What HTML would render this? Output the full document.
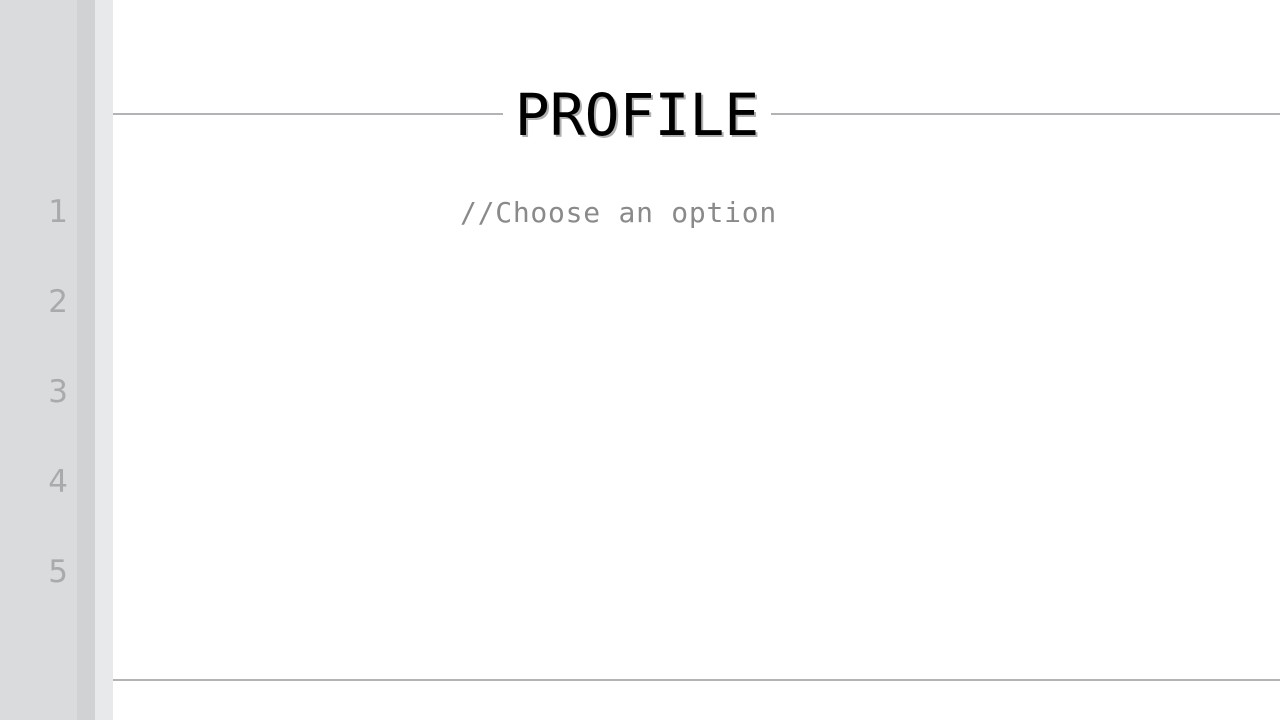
<!DOCTYPE html>
<html><head><meta charset="utf-8"><style>
html,body{margin:0;padding:0;width:1280px;height:720px;overflow:hidden;background:#fff;position:relative}
.g1{position:absolute;left:0;top:0;width:77px;height:720px;background:#dadbdd}
.g2{position:absolute;left:77px;top:0;width:18px;height:720px;background:#d1d2d4}
.g3{position:absolute;left:95px;top:0;width:18px;height:720px;background:#e8e9eb}
.n{position:absolute;left:28px;width:40px;text-align:right;font:31px "DejaVu Sans","Liberation Sans",sans-serif;color:#a9aaac;line-height:40px}
.line{position:absolute;height:2px;background:#b3b3b5}
.title{position:absolute;left:503px;width:268px;top:80px;text-align:center;font:58px "DejaVu Sans Mono","Liberation Mono",monospace;color:#000;text-shadow:2px 2px 0 #b0b0b0;line-height:70px;letter-spacing:0px}
.opt{position:absolute;left:460px;top:194px;font:28px "DejaVu Sans Mono","Liberation Mono",monospace;color:#8a8a8a;line-height:38px;letter-spacing:0.75px}
</style></head><body>
<div class="g1"></div><div class="g2"></div><div class="g3"></div>
<div class="n" style="top:192px">1</div>
<div class="n" style="top:282px">2</div>
<div class="n" style="top:372px">3</div>
<div class="n" style="top:462px">4</div>
<div class="n" style="top:552px">5</div>
<div class="line" style="left:113px;top:113px;width:390px"></div>
<div class="line" style="left:771px;top:113px;width:509px"></div>
<div class="title">PROFILE</div>
<div class="opt">//Choose an option</div>
<div class="line" style="left:113px;top:679px;width:1167px"></div>
</body></html>
